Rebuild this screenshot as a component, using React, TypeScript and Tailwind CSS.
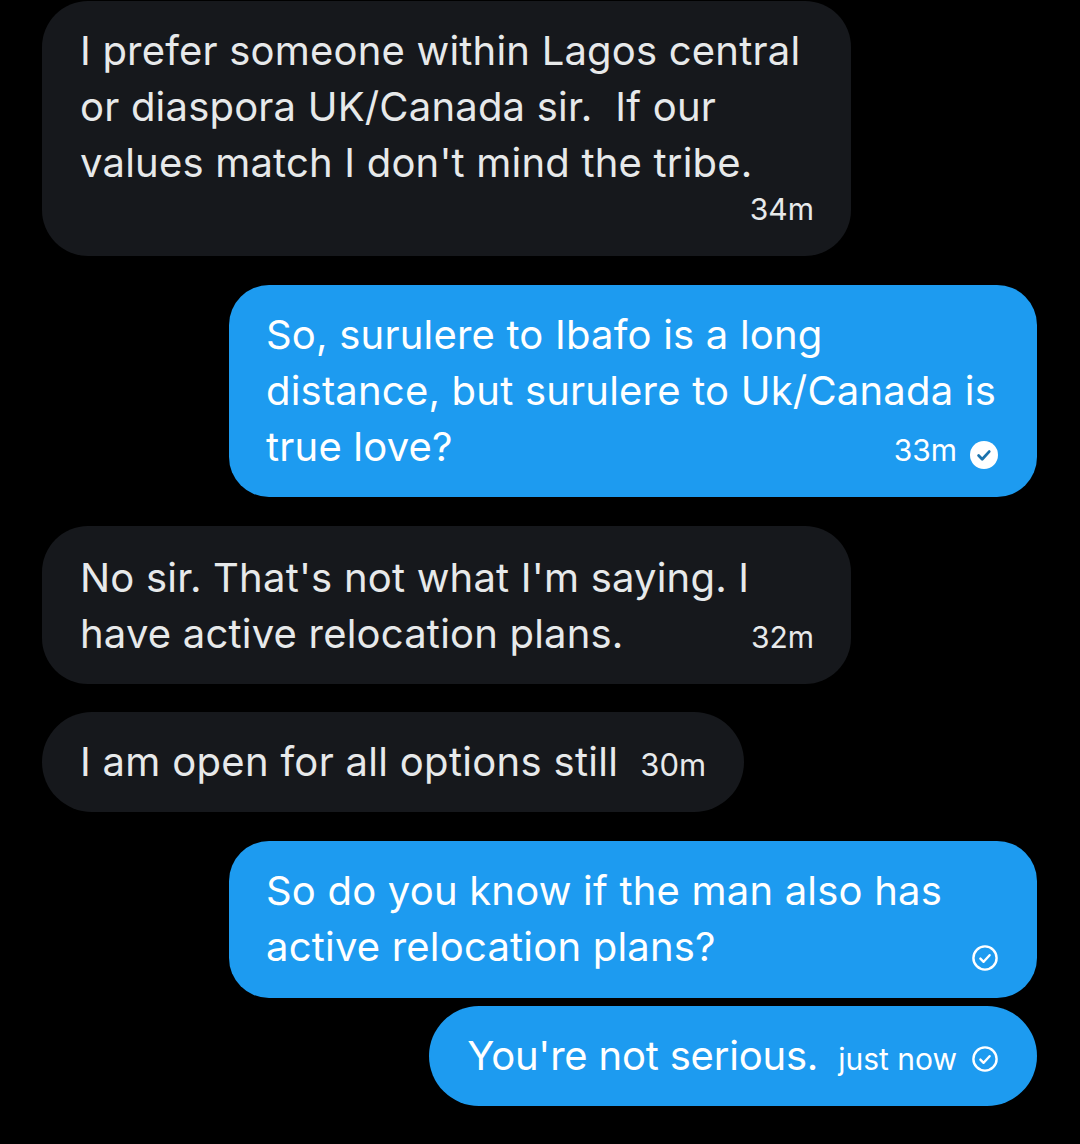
import React from "react";

const font = { fontFamily: "Inter, 'Noto Sans', sans-serif" };

function FilledCheck() {
    return (
        <svg width="28" height="28" viewBox="0 0 28 28" className="relative top-[5px] shrink-0">
            <circle cx="14" cy="14" r="14" fill="#ffffff" />
            <path d="M8.6 14.6l3.6 3.6 7-7.6" fill="none" stroke="#1b73ad" strokeWidth="2.8" strokeLinecap="round" strokeLinejoin="round" />
        </svg>
    );
}

function OutlineCheck() {
    return (
        <svg width="26" height="26" viewBox="0 0 26 26" className="shrink-0">
            <circle cx="13" cy="13" r="11.6" fill="none" stroke="#ffffff" strokeWidth="2.4" />
            <path d="M8.4 13.6l3.2 3.2 6-6.6" fill="none" stroke="#ffffff" strokeWidth="2.4" strokeLinecap="round" strokeLinejoin="round" />
        </svg>
    );
}

export default function App() {
    return (
        <div className="w-[1080px] h-[1144px] overflow-hidden bg-black flex flex-col pl-[42px] pr-[43px] pt-px text-[#e7e9ea]" style={font}>
            {/* received */}
            <div className="w-[809px] self-start rounded-[46px] bg-[#16181c] pl-[38px] pr-[37px] pt-[22px] pb-[29px]">
                <div className="text-[40px] leading-[56px] tracking-[0.2px] whitespace-nowrap">
                    <div>I prefer someone within Lagos central</div>
                    <div>or diaspora UK/Canada sir.&nbsp; If our</div>
                    <div>values match I don't mind the tribe.</div>
                </div>
                <div className="flex justify-end text-[30px] leading-[36px]">34m</div>
            </div>

            {/* sent */}
            <div className="mt-[29px] w-[808px] self-end rounded-[40px] bg-[#1d9bf0] text-white pl-[37px] pr-[39px] pt-[22px] pb-[22px]">
                <div className="text-[40px] leading-[56px] tracking-[0.2px] whitespace-nowrap">
                    <div>So, surulere to Ibafo is a long</div>
                    <div>distance, but surulere to Uk/Canada is</div>
                    <div className="flex items-baseline justify-between">
                        <span>true love?</span>
                        <span className="flex items-center gap-[13px] text-[30px] leading-[36px] tracking-normal">
                            33m
                            <FilledCheck />
                        </span>
                    </div>
                </div>
            </div>

            <div className="mt-[29px] w-[809px] self-start rounded-[46px] bg-[#16181c] pl-[38px] pr-[37px] pt-[24px] pb-[22px]">
                <div className="text-[40px] leading-[56px] tracking-[0.2px] whitespace-nowrap">
                    <div>No sir. That's not what I'm saying. I</div>
                    <div className="flex items-baseline justify-between">
                        <span>have active relocation plans.</span>
                        <span className="text-[30px] leading-[36px] tracking-normal">32m</span>
                    </div>
                </div>
            </div>

            <div className="mt-[28px] self-start rounded-[50px] bg-[#16181c] px-[38px] py-[22px]">
                <div className="flex items-baseline gap-[22px] whitespace-nowrap">
                    <span className="text-[40px] leading-[56px] tracking-[0.3px]">I am open for all options still</span>
                    <span className="text-[31px] leading-[36px]">30m</span>
                </div>
            </div>

            <div className="mt-[29px] w-[808px] self-end rounded-[40px] bg-[#1d9bf0] text-white pl-[37px] pr-[39px] pt-[22px] pb-[23px]">
                <div className="text-[40px] leading-[56px] tracking-[0.2px] whitespace-nowrap">
                    <div>So do you know if the man also has</div>
                    <div className="flex items-end justify-between">
                        <span>active relocation plans?</span>
                        <span className="mb-[4px]">
                            <OutlineCheck />
                        </span>
                    </div>
                </div>
            </div>

            <div className="mt-[8px] self-end rounded-[50px] bg-[#1d9bf0] text-white pl-[38px] pr-[39px] py-[22px]">
                <div className="flex items-baseline whitespace-nowrap">
                    <span className="text-[40px] leading-[56px] tracking-[-0.2px]">You're not serious.</span>
                    <span className="ml-[20px] flex items-center gap-[15px] text-[30px] leading-[36px]">
                        just now
                        <OutlineCheck />
                    </span>
                </div>
            </div>
        </div>
    );
}
